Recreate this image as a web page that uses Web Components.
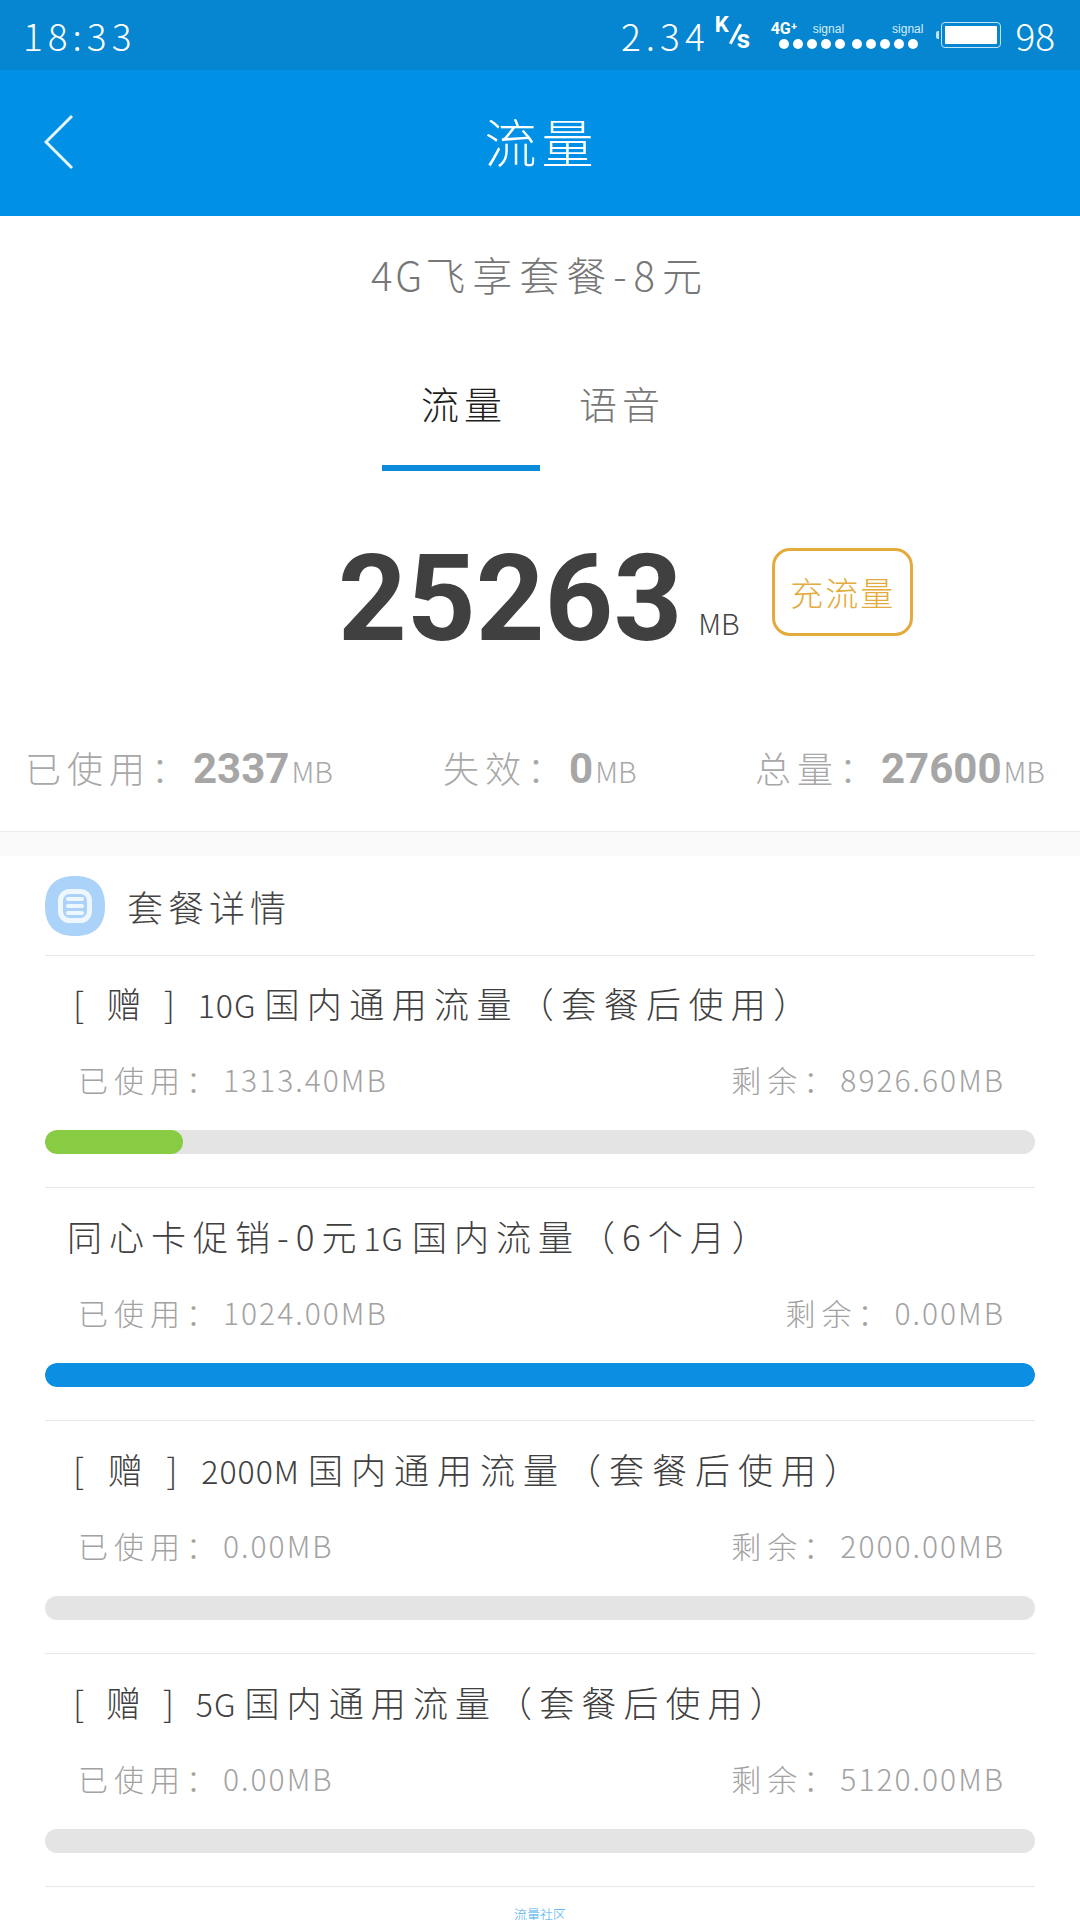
<!DOCTYPE html>
<html lang="zh-CN">
<head>
<meta charset="utf-8">
<title>流量</title>
<style>
    html, body {
        margin: 0;
        height: 1920px;
        overflow: hidden;
        background: #fff;
        font-family: "Noto Sans CJK SC", "Noto Sans", sans-serif;
        font-weight: 300;
    }
</style>
</head>
<body>
<flow-page>
    <status-bar slot="status"></status-bar>
    <app-header>流量</app-header>
    <plan-name><span>4G</span>飞享套餐-8元</plan-name>
    <tab-bar>
        <span class="on">流量</span>
        <span>语音</span>
    </tab-bar>
    <usage-total value="25263" unit="MB" action="充流量"></usage-total>
    <usage-stats>
        <stat-item label="已使用：" value="2337"></stat-item>
        <stat-item label="失效：" value="0"></stat-item>
        <stat-item label="总量：" value="27600"></stat-item>
    </usage-stats>
    <section-title>套餐详情</section-title>
    <plan-row name="[ 赠 ] 10G国内通用流量（套餐后使用）" used="1313.40MB" left="8926.60MB" percent="13.9" color="#88cc44" inset="28" spacing="7.4"></plan-row>
    <plan-row name="同心卡促销-0元1G国内流量（6个月）" used="1024.00MB" left="0.00MB" percent="100" color="#0b8fe3" inset="22" spacing="7"></plan-row>
    <plan-row name="[ 赠 ] 2000M国内通用流量（套餐后使用）" used="0.00MB" left="2000.00MB" percent="0" color="#88cc44" inset="28" spacing="8"></plan-row>
    <plan-row name="[ 赠 ] 5G国内通用流量（套餐后使用）" used="0.00MB" left="5120.00MB" percent="0" color="#88cc44" inset="28" spacing="7.1"></plan-row>
    <plan-row name="同心卡促销-0元2G国内通用流量包（6个月）" inset="22" spacing="7"></plan-row>
    <water-mark>流量社区</water-mark>
</flow-page>

<script>
class FlowPage extends HTMLElement {
    constructor() {
        super();
        this.attachShadow({ mode: 'open' });
        this.shadowRoot.innerHTML = `
        <style>
            :host {
                display: flex;
                flex-direction: column;
                position: relative;
                width: 1080px;
                height: 1920px;
                overflow: hidden;
                background: #fff;
            }
        </style>
        <slot name="status"></slot>
        <slot></slot>
        `;
    }
}

class StatusBar extends HTMLElement {
    constructor() {
        super();
        this.attachShadow({ mode: 'open' });
        const dots = '<i></i><i></i><i></i><i></i><i></i>';
        this.shadowRoot.innerHTML = `
        <style>
            :host {
                display: flex;
                flex: none;
                align-items: center;
                justify-content: space-between;
                height: 70px;
                padding: 0 25px 0 23px;
                box-sizing: border-box;
                background: #0686d0;
                color: #fff;
            }
            .time, .rate, .level {
                font-size: 37px;
                font-weight: 300;
                letter-spacing: 5px;
                line-height: 70px;
            }
            .level { letter-spacing: 0; }
            .right {
                display: flex;
                align-items: center;
            }
            .speed {
                position: relative;
                width: 44px;
                height: 34px;
                margin: 0 12px 0 5px;
                font: bold 22px/1 "Roboto", "Liberation Sans", sans-serif;
            }
            .speed b { position: absolute; left: 0; top: -4px; font-weight: bold; }
            .speed u {
                position: absolute;
                left: 19px;
                top: 5px;
                width: 3px;
                height: 22px;
                background: #fff;
                transform: rotate(28deg);
            }
            .speed em { position: absolute; left: 22px; top: 8px; font-size: 26px; font-style: normal; }
            .sim {
                display: flex;
                flex-direction: column;
                gap: 3px;
                margin-right: 18px;
            }
            .labels {
                display: flex;
                align-items: flex-end;
                height: 14px;
                font: 12px/14px "Liberation Sans", sans-serif;
                color: #d8eefa;
            }
            .labels b { font: bold 16px/14px "Roboto", sans-serif; color: #fff; width: 42px; }
            .labels span:last-child { margin-left: 48px; }
            .dots { display: flex; gap: 4px; padding-left: 8px; }
            .dots i { width: 10px; height: 10px; border-radius: 50%; background: #fff; }
            .dots i:nth-child(6) { margin-left: 3px; }
            .battery {
                position: relative;
                width: 60px;
                height: 26px;
                box-sizing: border-box;
                padding: 3px;
                border: 1px solid #bfe3f8;
                border-radius: 4px;
                margin-right: 14px;
            }
            .battery::before {
                content: "";
                position: absolute;
                left: -6px;
                top: 8px;
                width: 3px;
                height: 8px;
                background: #bfe3f8;
                border-radius: 2px 0 0 2px;
            }
            .battery i { display: block; height: 100%; background: #fff; border-radius: 1px; }
        </style>
        <span class="time">18:33</span>
        <div class="right">
            <span class="rate">2.34</span>
            <span class="speed"><b>K</b><u></u><em>s</em></span>
            <div class="sim">
                <div class="labels"><b>4G⁺</b><span>signal</span><span>signal</span></div>
                <div class="dots">${dots}${dots}</div>
            </div>
            <div class="battery"><i></i></div>
            <span class="level">98</span>
        </div>
        `;
    }
}

class AppHeader extends HTMLElement {
    constructor() {
        super();
        this.attachShadow({ mode: 'open' });
        this.shadowRoot.innerHTML = `
        <style>
            :host {
                display: flex;
                flex: none;
                position: relative;
                align-items: center;
                justify-content: center;
                height: 146px;
                padding: 0 0 6px 3px;
                box-sizing: border-box;
                background: #0090e6;
                color: #fff;
                font-size: 52px;
                letter-spacing: 5px;
            }
            svg { position: absolute; left: 44px; top: 44px; }
        </style>
        <svg width="30" height="56" viewBox="0 0 30 56" fill="none">
            <path d="M28 2 L2 28 L28 54" stroke="#e8f6ff" stroke-width="3"/>
        </svg>
        <slot></slot>
        `;
    }
}

class PlanName extends HTMLElement {
    constructor() {
        super();
        this.attachShadow({ mode: 'open' });
        this.shadowRoot.innerHTML = `
        <style>
            :host {
                display: block;
                flex: none;
                height: 124px;
                padding-top: 31px;
                box-sizing: border-box;
                text-align: center;
                font-size: 40px;
                line-height: 54px;
                letter-spacing: 7px;
                color: #777;
            }
            ::slotted(span) { letter-spacing: 3px; }
        </style>
        <slot></slot>
        `;
    }
}

class TabBar extends HTMLElement {
    constructor() {
        super();
        this.attachShadow({ mode: 'open' });
        this.shadowRoot.innerHTML = `
        <style>
            :host {
                display: flex;
                flex: none;
                position: relative;
                height: 131px;
                padding: 36px 0 0 421px;
                box-sizing: border-box;
                gap: 72px;
                font-size: 38px;
                line-height: 54px;
                letter-spacing: 5px;
                color: #777;
            }
            ::slotted(.on) { color: #1e1e1e; }
            .line {
                position: absolute;
                left: 382px;
                bottom: 0;
                width: 158px;
                height: 6px;
                background: #0c8bdb;
            }
        </style>
        <slot></slot>
        <div class="line"></div>
        `;
    }
}

class UsageTotal extends HTMLElement {
    constructor() {
        super();
        this.attachShadow({ mode: 'open' });
        this.shadowRoot.innerHTML = `
        <style>
            :host {
                display: flex;
                flex: none;
                align-items: flex-start;
                height: 225px;
                padding: 77px 0 0 338px;
                box-sizing: border-box;
            }
            .num {
                margin-top: 7px;
                font: bold 120px/89px "Roboto", "Liberation Sans", sans-serif;
                color: #404040;
            }
            .unit {
                align-self: flex-start;
                margin: 56px 0 0 16px;
                width: 44px;
                font-size: 29px;
                line-height: 36px;
                color: #444;
            }
            .btn {
                width: 141px;
                height: 88px;
                margin-left: 30px;
                box-sizing: border-box;
                border: 3px solid #e3ab3c;
                border-radius: 18px;
                color: #e3ab3c;
                font-size: 33px;
                line-height: 82px;
                text-align: center;
                letter-spacing: 2px;
            }
        </style>
        <span class="num"></span>
        <span class="unit"></span>
        <span class="btn"></span>
        `;
    }

    connectedCallback() {
        this.shadowRoot.querySelector('.num').textContent = this.getAttribute('value');
        this.shadowRoot.querySelector('.unit').textContent = this.getAttribute('unit');
        this.shadowRoot.querySelector('.btn').textContent = this.getAttribute('action');
    }
}

class UsageStats extends HTMLElement {
    constructor() {
        super();
        this.attachShadow({ mode: 'open' });
        this.shadowRoot.innerHTML = `
        <style>
            :host {
                display: grid;
                flex: none;
                grid-template-columns: 418px 312px auto;
                align-items: center;
                height: 136px;
                padding: 10px 0 0 25px;
                box-sizing: border-box;
                border-bottom: 1px solid #ececec;
            }
        </style>
        <slot></slot>
        `;
    }
}

class StatItem extends HTMLElement {
    constructor() {
        super();
        this.attachShadow({ mode: 'open' });
        this.shadowRoot.innerHTML = `
        <style>
            :host {
                display: flex;
                align-items: baseline;
                color: #a8a8a8;
                font-size: 36px;
                line-height: 50px;
            }
            b {
                font: bold 42px/50px "Roboto", "Liberation Sans", sans-serif;
                color: #a6a6a6;
            }
            .label { letter-spacing: 6px; }
            .unit { font-size: 29px; margin-left: 2px; }
        </style>
        <span class="label"></span><b></b><span class="unit">MB</span>
        `;
    }

    connectedCallback() {
        this.shadowRoot.querySelector('.label').textContent = this.getAttribute('label');
        this.shadowRoot.querySelector('b').textContent = this.getAttribute('value');
    }
}

class SectionTitle extends HTMLElement {
    constructor() {
        super();
        this.attachShadow({ mode: 'open' });
        this.shadowRoot.innerHTML = `
        <style>
            :host {
                display: flex;
                flex: none;
                align-items: center;
                gap: 22px;
                height: 124px;
                margin: 0 45px -1px;
                padding-top: 24px;
                box-sizing: border-box;
                border-bottom: 1px solid #e8e8e8;
                font-size: 36px;
                letter-spacing: 5px;
                color: #444;
            }
            :host::before {
                content: "";
                position: absolute;
                left: 0;
                right: 0;
                top: 832px;
                height: 24px;
                background: #fafafa;
            }
            svg { flex: none; }
        </style>
        <svg width="60" height="60" viewBox="0 0 60 60">
            <path d="M30 0 C50 0 60 10 60 30 C60 50 50 60 30 60 C10 60 0 50 0 30 C0 10 10 0 30 0 Z" fill="#abd2f9"/>
            <rect x="15.5" y="15.5" width="29" height="29" rx="9" fill="#abd2f9" stroke="#eef6fe" stroke-width="5"/>
            <rect x="21" y="21" width="18" height="4" rx="2" fill="#eef6fe"/>
            <rect x="21" y="28" width="18" height="4" rx="2" fill="#eef6fe"/>
            <rect x="21" y="35" width="18" height="4" rx="2" fill="#eef6fe"/>
        </svg>
        <slot></slot>
        `;
    }
}

class PlanRow extends HTMLElement {
    constructor() {
        super();
        this.attachShadow({ mode: 'open' });
        this.shadowRoot.innerHTML = `
        <style>
            :host {
                display: block;
                flex: none;
                height: 233px;
                margin: 0 45px;
                box-sizing: border-box;
                border-bottom: 1px solid #e8e8e8;
            }
            .name {
                height: 96px;
                font-size: 35px;
                line-height: 96px;
                color: #404040;
                white-space: pre;
            }
            .name span { font-size: 32px; letter-spacing: 1px; margin-right: 8px; }
            .meta {
                display: flex;
                justify-content: space-between;
                height: 56px;
                padding: 0 30px 0 33px;
                font-size: 30px;
                line-height: 56px;
                letter-spacing: 2px;
                color: #a2a2a2;
            }
            .meta b { font-weight: 300; letter-spacing: 6px; margin-right: 1px; }
            .meta i { font-style: normal; }
            .track {
                height: 24px;
                margin-top: 23px;
                border-radius: 12px;
                background: #e4e4e4;
                overflow: hidden;
            }
            .fill { height: 100%; border-radius: 12px; }
        </style>
        <div class="name"></div>
        <div class="meta"><span><b>已使用：</b><i></i></span><span><b>剩余：</b><i></i></span></div>
        <div class="track"><div class="fill"></div></div>
        `;
    }

    connectedCallback() {
        const root = this.shadowRoot;
        const name = root.querySelector('.name');
        name.style.paddingLeft = this.getAttribute('inset') + 'px';
        name.style.letterSpacing = this.getAttribute('spacing') + 'px';
        // latin runs sit tighter than the chinese text around them
        this.getAttribute('name').split(/(\d+[A-Z])/).forEach((part, i) => {
            if (i % 2) {
                const run = document.createElement('span');
                run.textContent = part;
                name.append(run);
            } else {
                name.append(part);
            }
        });
        const meta = root.querySelector('.meta');
        if (!this.hasAttribute('used')) {
            meta.remove();
            root.querySelector('.track').remove();
            return;
        }
        const values = meta.querySelectorAll('i');
        values[0].textContent = this.getAttribute('used');
        values[1].textContent = this.getAttribute('left');
        const fill = root.querySelector('.fill');
        fill.style.width = this.getAttribute('percent') + '%';
        fill.style.background = this.getAttribute('color');
    }
}

class WaterMark extends HTMLElement {
    constructor() {
        super();
        this.attachShadow({ mode: 'open' });
        this.shadowRoot.innerHTML = `
        <style>
            :host {
                position: absolute;
                left: 514px;
                top: 1907px;
                font-size: 13px;
                line-height: 14px;
                color: #45aef0;
            }
        </style>
        <slot></slot>
        `;
    }
}

customElements.define('flow-page', FlowPage);
customElements.define('status-bar', StatusBar);
customElements.define('app-header', AppHeader);
customElements.define('plan-name', PlanName);
customElements.define('tab-bar', TabBar);
customElements.define('usage-total', UsageTotal);
customElements.define('usage-stats', UsageStats);
customElements.define('stat-item', StatItem);
customElements.define('section-title', SectionTitle);
customElements.define('plan-row', PlanRow);
customElements.define('water-mark', WaterMark);
</script>
</body>
</html>
